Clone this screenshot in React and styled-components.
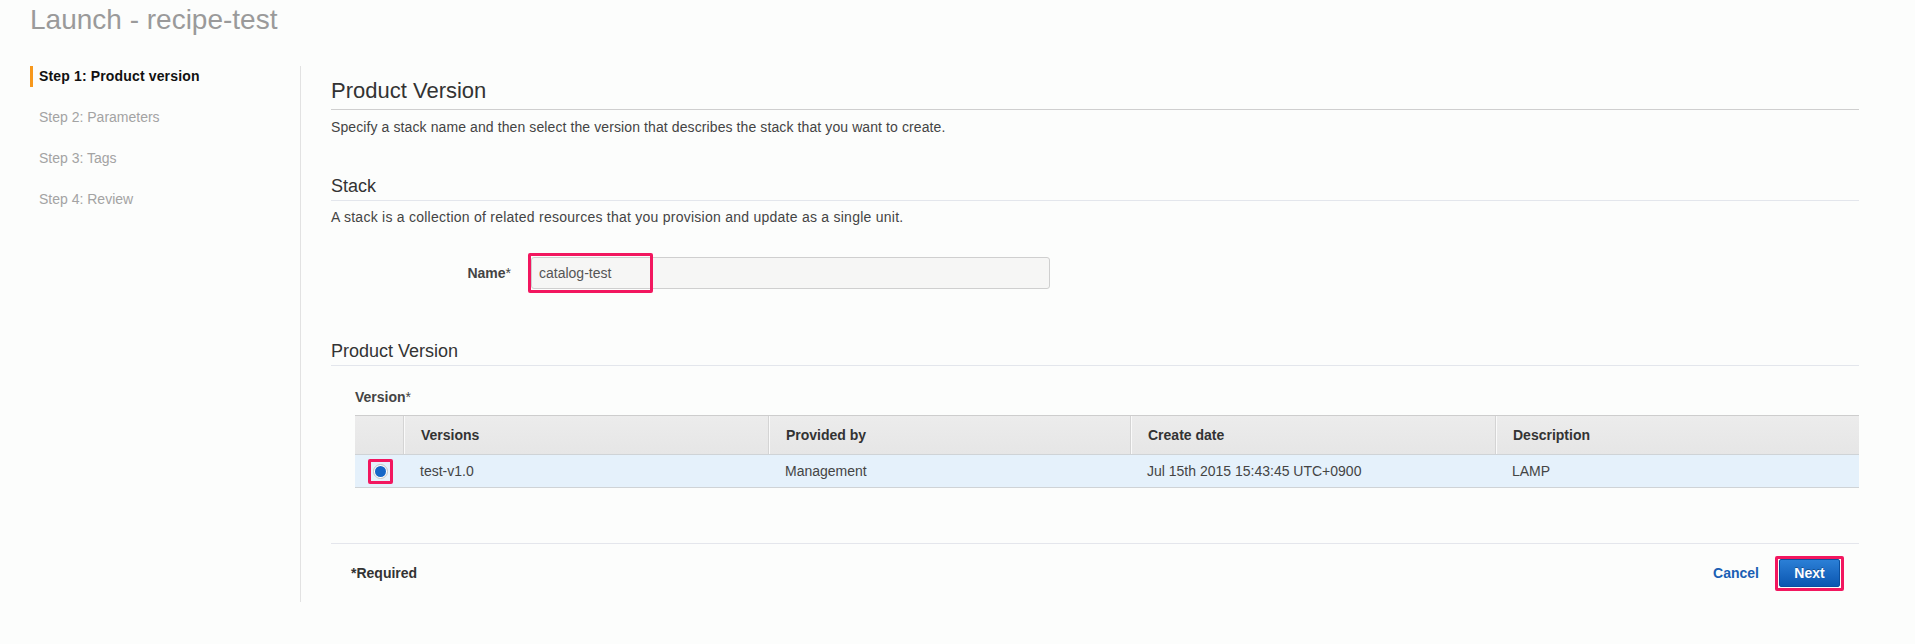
import styled, { createGlobalStyle } from 'styled-components';

const GlobalStyle = createGlobalStyle`
    body{
        margin: 0;
        background: #fcfdfc;
        font-family: "Liberation Sans", Arial, sans-serif;
        color: #444;
    }
`;

const steps = ["Step 1: Product version", "Step 2: Parameters", "Step 3: Tags", "Step 4: Review"];

const columns = [
    { key: "versions", label: "Versions" },
    { key: "provider", label: "Provided by" },
    { key: "created", label: "Create date" },
    { key: "description", label: "Description" },
];

const rows = [
    { versions: "test-v1.0", provider: "Management", created: "Jul 15th 2015 15:43:45 UTC+0900", description: "LAMP", selected: true },
];

const App = () => {
    return(
        <Page>
            <GlobalStyle />
            <Title>Launch - recipe-test</Title>
            <Layout>
                <Steps>
                    {steps.map((s, i) => (
                        <Step key={s} $active={i === 0}>{s}</Step>
                    ))}
                </Steps>
                <Main>
                    <PageHeading>Product Version</PageHeading>
                    <Text>Specify a stack name and then select the version that describes the stack that you want to create.</Text>

                    <SectionHeading>Stack</SectionHeading>
                    <Text $gap={7} $spacing={0.25}>A stack is a collection of related resources that you provision and update as a single unit.</Text>

                    <FieldRow>
                        <Label>Name<span>*</span></Label>
                        <InputWrap>
                            <Input defaultValue="catalog-test" />
                            <Highlight $left={-3} $top={-4} $width={125} $height={40} />
                        </InputWrap>
                    </FieldRow>

                    <SectionHeading $gap={51}>Product Version</SectionHeading>
                    <VersionBlock>
                        <BlockLabel>Version<span>*</span></BlockLabel>
                        <Table>
                            <HeadCell />
                            {columns.map(c => (
                                <HeadCell key={c.key}>{c.label}</HeadCell>
                            ))}
                            {rows.map(r => (
                                <Row key={r.versions} $selected={r.selected}>
                                    <Cell $center>
                                        <RadioWrap>
                                            <Radio $checked={r.selected} />
                                            <Highlight $left={-5} $top={-5} $width={25} $height={25} />
                                        </RadioWrap>
                                    </Cell>
                                    {columns.map(c => (
                                        <Cell key={c.key}>{r[c.key]}</Cell>
                                    ))}
                                </Row>
                            ))}
                        </Table>
                    </VersionBlock>

                    <Footer>
                        <Required>*Required</Required>
                        <Actions>
                            <LinkButton>Cancel</LinkButton>
                            <NextWrap>
                                <PrimaryButton>Next</PrimaryButton>
                                <Highlight $left={-4} $top={-3} $width={69} $height={35} />
                            </NextWrap>
                        </Actions>
                    </Footer>
                </Main>
            </Layout>
        </Page>
    );
}

const Page = styled.div`
    padding: 4px 0 0 30px;
    min-height: 640px;
`;

const Title = styled.h1`
    margin: 0;
    font-size: 28px;
    line-height: 31px;
    font-weight: 400;
    color: #9a9a9a;
`;

const Layout = styled.div`
    display: flex;
    margin-top: 31px;
`;

const Steps = styled.ul`
    list-style: none;
    margin: 0;
    padding: 0;
    width: 270px;
    flex-shrink: 0;
`;

const Step = styled.li`
    height: 21px;
    line-height: 21px;
    margin-bottom: 20px;
    padding-left: 6px;
    font-size: 14px;
    border-left: 3px solid ${p => p.$active ? "#f7981c" : "transparent"};
    font-weight: ${p => p.$active ? 700 : 400};
    color: ${p => p.$active ? "#111" : "#a3a3a3"};
    letter-spacing: ${p => p.$active ? "0.15px" : "0"};
`;

const Main = styled.div`
    flex: 1;
    height: 536px;
    box-sizing: border-box;
    border-left: 1px solid #e2e2e2;
    padding: 12px 56px 0 30px;
`;

const PageHeading = styled.h2`
    margin: 0;
    font-size: 22px;
    line-height: 26px;
    font-weight: 400;
    color: #333;
    padding-bottom: 5px;
    border-bottom: 1px solid #cfcfcf;
`;

const SectionHeading = styled.h3`
    margin: ${p => p.$gap || 39}px 0 0;
    font-size: 18px;
    line-height: 22px;
    font-weight: 400;
    color: #333;
    padding-bottom: 3px;
    border-bottom: 1px solid #e3e6ec;
`;

const Text = styled.p`
    margin: ${p => p.$gap || 8}px 0 0;
    font-size: 14px;
    line-height: 18px;
    color: #444;
    letter-spacing: ${p => p.$spacing || 0.1}px;
`;

const FieldRow = styled.div`
    display: flex;
    align-items: center;
    gap: 20px;
    margin-top: 31px;
`;

const Label = styled.label`
    width: 180px;
    text-align: right;
    font-size: 14px;
    font-weight: 700;
    color: #444;

    span{
        font-weight: 400;
    }
`;

const InputWrap = styled.div`
    position: relative;
    width: 519px;
`;

const Input = styled.input`
    display: block;
    box-sizing: border-box;
    width: 100%;
    height: 32px;
    padding: 0 7px;
    border: 1px solid #cfcfcf;
    border-radius: 3px;
    background: #f6f6f5;
    font-family: inherit;
    font-size: 14px;
    color: #555;
    outline: none;
`;

const Highlight = styled.div`
    position: absolute;
    left: ${p => p.$left}px;
    top: ${p => p.$top}px;
    width: ${p => p.$width}px;
    height: ${p => p.$height}px;
    box-sizing: border-box;
    border: 3px solid #f2175f;
    border-radius: 2px;
    pointer-events: none;
`;

const VersionBlock = styled.div`
    padding-left: 24px;
    margin-top: 22px;
`;

const BlockLabel = styled.div`
    font-size: 14px;
    line-height: 18px;
    font-weight: 700;
    color: #444;

    span{
        font-weight: 400;
    }
`;

const Table = styled.div`
    display: grid;
    grid-template-columns: 48px 365px 362px 365px 1fr;
    margin-top: 9px;
    border-top: 1px solid #cdcdcd;
`;

const HeadCell = styled.div`
    height: 38px;
    display: flex;
    align-items: center;
    padding-left: 17px;
    background: linear-gradient(#ececec, #e6e6e6);
    border-left: 1px solid #d4d4d4;
    box-shadow: inset 1px 0 0 #fafafa;
    font-size: 14px;
    font-weight: 700;
    color: #333;

    &:first-child{
        border-left: none;
        box-shadow: none;
    }
`;

const Row = styled.div`
    display: contents;

    & > div{
        background: ${p => p.$selected ? "#e5f1fb" : "#fff"};
    }
`;

const Cell = styled.div`
    height: 32px;
    display: flex;
    align-items: center;
    justify-content: ${p => p.$center ? "center" : "flex-start"};
    padding-left: ${p => p.$center ? 0 : 17}px;
    border-top: 1px solid #cfd3d6;
    border-bottom: 1px solid #cfd3d6;
    font-size: 14px;
    color: #444;
`;

const RadioWrap = styled.div`
    position: relative;
    width: 15px;
    height: 15px;
    margin-left: 2px;
`;

const Radio = styled.span`
    display: block;
    box-sizing: border-box;
    width: 15px;
    height: 15px;
    border-radius: 50%;
    border: 1px solid #c2c2c2;
    background: #fff;
    position: relative;

    &::after{
        content: "";
        position: absolute;
        inset: 1px;
        border-radius: 50%;
        background: ${p => p.$checked ? "#1566c7" : "transparent"};
    }
`;

const Footer = styled.div`
    display: flex;
    align-items: center;
    justify-content: space-between;
    margin-top: 55px;
    padding: 15px 19px 0 20px;
    border-top: 1px solid #e4e6ec;
`;

const Required = styled.div`
    font-size: 14px;
    font-weight: 700;
    color: #333;
`;

const Actions = styled.div`
    display: flex;
    align-items: center;
    gap: 20px;
`;

const LinkButton = styled.button`
    border: none;
    background: transparent;
    padding: 0;
    font-family: inherit;
    font-size: 14px;
    font-weight: 700;
    color: #1a5fb4;
    cursor: pointer;
`;

const NextWrap = styled.div`
    position: relative;
`;

const PrimaryButton = styled.button`
    display: block;
    width: 61px;
    height: 28px;
    border: 1px solid #0b4f9e;
    border-radius: 2px;
    background: linear-gradient(#2b7fd6, #0c57b1);
    font-family: inherit;
    font-size: 14px;
    font-weight: 700;
    color: #fff;
    text-shadow: 0 -1px 0 rgba(0,0,0,0.3);
    cursor: pointer;
`;

export default App;
